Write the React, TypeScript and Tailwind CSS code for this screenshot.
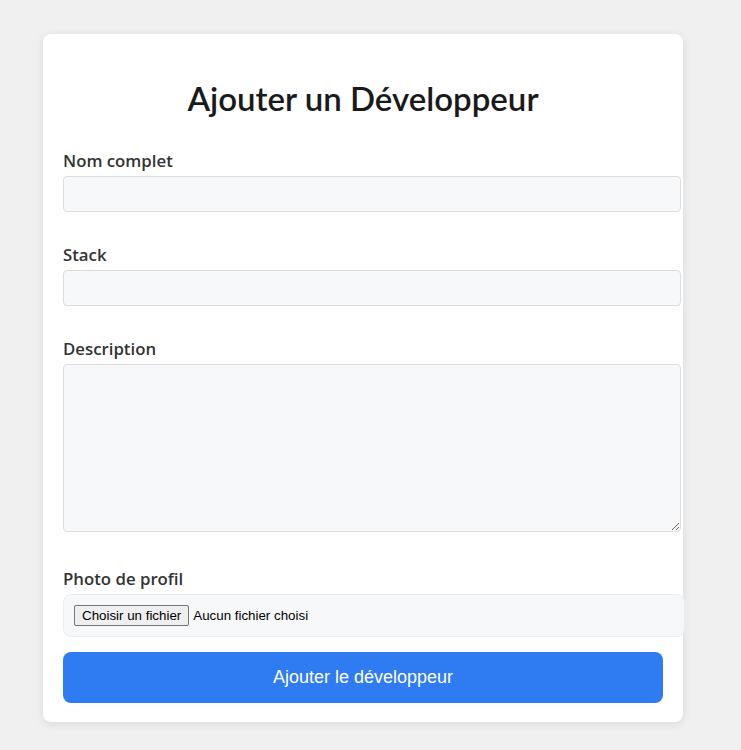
export default function App() {
	return (
		<div className="min-h-[750px] bg-[#f0f0f0] pt-[34px] pl-[43px]">
			<div className="w-[640px] rounded-lg bg-white px-5 pt-5 pb-[19px] shadow-[0_2px_10px_rgba(0,0,0,0.1)] font-['Open_Sans',sans-serif]">
				<h2 className="mt-[25px] mb-[34px] text-center text-[33px] leading-[38px] font-semibold text-[#1a1a1a] font-['Lato',sans-serif]">
					Ajouter un Développeur
				</h2>

				<label className="block text-[16.8px] leading-5 font-semibold text-[#333] mb-[5px]">Nom complet</label>
				<input className="box-content block w-[594px] h-[34px] px-[11px] border border-[#dcdcdc] rounded bg-[#f7f8fa] mb-[33px] outline-none" />

				<label className="block text-[16.8px] leading-5 font-semibold text-[#333] mb-[5px]">Stack</label>
				<input className="box-content block w-[594px] h-[34px] px-[11px] border border-[#dcdcdc] rounded bg-[#f7f8fa] mb-[33px] outline-none" />

				<label className="block text-[16.8px] leading-5 font-semibold text-[#333] mb-[5px]">Description</label>
				<textarea className="box-content block w-[594px] h-[166px] px-[11px] border border-[#dcdcdc] rounded bg-[#f7f8fa] mb-[37px] outline-none" />

				<label className="block text-[16.8px] leading-5 font-semibold text-[#333] mb-[5px]">Photo de profil</label>
				<div className="box-content flex items-center w-[600px] h-[41px] px-[10px] border border-[#ececec] rounded-lg bg-[#f7f8fa] mb-[15px] font-['Liberation_Sans',sans-serif] text-[13.33px] text-black">
					<span className="h-[21px] px-[7px] leading-[19px] border border-[#767676] rounded-[2px] bg-[#efefef]">Choisir un fichier</span>
					<span className="ml-[4px]">Aucun fichier choisi</span>
				</div>

				<button className="w-[600px] h-[51px] rounded-lg bg-[#2f7bf2] text-white text-[18px] font-['Liberation_Sans',sans-serif]">
					Ajouter le développeur
				</button>
			</div>
		</div>
	);
}
